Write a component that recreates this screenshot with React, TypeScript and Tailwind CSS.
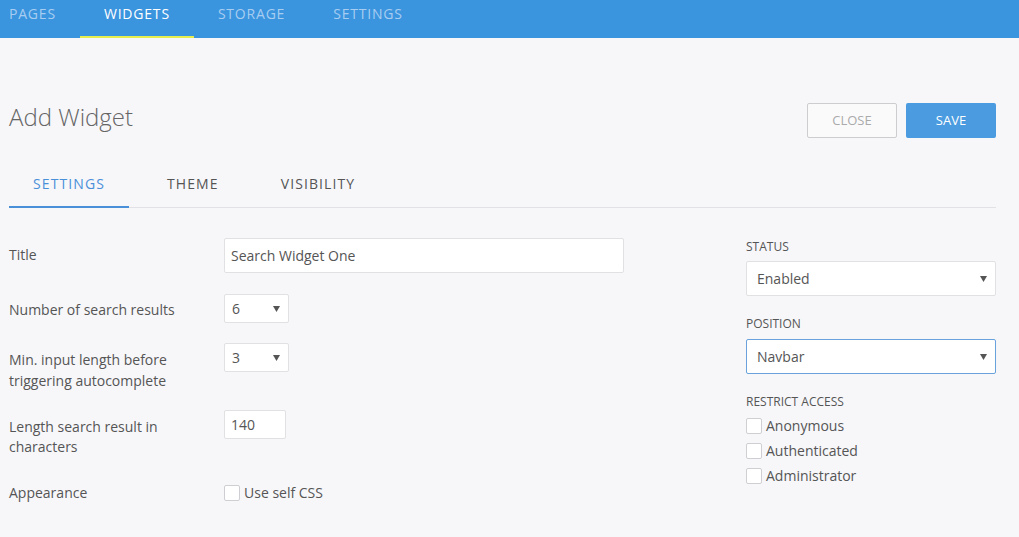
import { useState } from "react";

const NAV = ["Pages", "Widgets", "Storage", "Settings"];
const TABS = ["Settings", "Theme", "Visibility"];
const ROLES = ["Anonymous", "Authenticated", "Administrator"];

function Caret() {
  return (
    <svg width="7" height="6" viewBox="0 0 7 6" className="pointer-events-none absolute right-[8px] top-1/2 -translate-y-1/2">
      <path d="M0 0h7L3.5 6z" fill="#555" />
    </svg>
  );
}

function Select({ value, className, focused }: { value: string; className: string; focused?: boolean }) {
  return (
    <div
      className={`relative flex items-center rounded-[2px] border bg-white text-[14px] text-[#555] ${
        focused ? "border-[#6aa3dc]" : "border-[#e1e1e4]"
      } ${className}`}
    >
      {value}
      <Caret />
    </div>
  );
}

function Checkbox({ label }: { label: string }) {
  return (
    <label className="flex items-center gap-[4px] text-[14px] text-[#555]">
      <span className="h-[16px] w-[16px] rounded-[2px] border border-[#cfcfd3] bg-white" />
      {label}
    </label>
  );
}

export default function App() {
  const [tab] = useState("Settings");

  return (
    <div className="min-h-screen bg-[#f7f7fa] font-['Open_Sans',sans-serif] text-[#555]">
      {/* top bar */}
      <nav className="flex h-[38px] bg-[#3b94de]">
        <ul className="-ml-[15px] flex">
          {NAV.map((n) => (
            <li
              key={n}
              className={`h-[38px] border-b-2 px-6 pt-[5px] text-[14px] leading-[18px] uppercase tracking-[0.8px] ${
                n === "Widgets" ? "border-[#e6ef4e] text-white" : "border-transparent text-[#a7cdf1]"
              }`}
            >
              {n}
            </li>
          ))}
        </ul>
      </nav>

      <main className="pl-[9px] pr-[23px]">
        <div className="mt-[65px] flex items-start justify-between">
          <h1 className="-mt-[4px] text-[24px] font-light leading-9 text-[#666]">Add Widget</h1>
          <div className="flex gap-[9px]">
            <button className="h-[35px] w-[90px] rounded-[2px] border border-[#cdcdcf] bg-[#fafafb] text-[13px] text-[#aaa]">
              CLOSE
            </button>
            <button className="h-[35px] w-[90px] rounded-[2px] bg-[#4a9be0] text-[13px] text-white">SAVE</button>
          </div>
        </div>

        <div className="mt-[35px] flex border-b border-[#e2e2e6]">
          {TABS.map((t) => (
            <div
              key={t}
              className={`-mb-[1px] border-b-2 px-6 pb-[12px] text-[14px] uppercase tracking-[1.1px] ${
                t === tab ? "border-[#4a90d9] text-[#4a90d9]" : "border-transparent text-[#555]"
              } ${t === "Theme" ? "px-[38px]" : ""}`}
            >
              {t}
            </div>
          ))}
        </div>

        <div className="mt-[30px] flex justify-between">
          <div className="flex flex-col">
            <div className="mb-[21px] flex items-start">
              <span className="w-[215px] pt-[7px] text-[14px] leading-5">Title</span>
              <div className="flex h-[35px] w-[400px] items-center rounded-[2px] border border-[#e1e1e4] bg-white px-[6px] text-[14px]">
                Search Widget One
              </div>
            </div>
            <div className="mb-[20px] flex items-start">
              <span className="w-[215px] pt-[6px] text-[14px] leading-5">Number of search results</span>
              <Select value="6" className="h-[29px] w-[65px] px-[7px]" />
            </div>
            <div className="mb-[19px] flex items-start">
              <span className="w-[215px] pt-[6px] text-[14px] leading-[21px]">
                Min. input length before
                <br />
                triggering autocomplete
              </span>
              <Select value="3" className="h-[29px] w-[65px] px-[7px]" />
            </div>
            <div className="mb-[25px] flex items-start">
              <span className="w-[215px] pt-[7px] text-[14px] leading-5">
                Length search result in
                <br />
                characters
              </span>
              <div className="flex h-[29px] w-[62px] items-center rounded-[2px] border border-[#e1e1e4] bg-white px-[6px] text-[14px]">
                140
              </div>
            </div>
            <div className="flex items-center">
              <span className="w-[215px] text-[14px] leading-5">Appearance</span>
              <Checkbox label="Use self CSS" />
            </div>
          </div>

          <div className="flex w-[250px] flex-col">
            <span className="mb-[6px] pt-[1px] text-[12px] leading-4">STATUS</span>
            <Select value="Enabled" className="h-[35px] w-full px-[10px]" />
            <span className="mb-[7px] mt-[20px] text-[12px] leading-4">POSITION</span>
            <Select value="Navbar" focused className="h-[35px] w-full px-[10px]" />
            <span className="mb-[5px] mt-[20px] text-[12px] leading-4">RESTRICT ACCESS</span>
            <div className="flex flex-col gap-[4px]">
              {ROLES.map((r) => (
                <Checkbox key={r} label={r} />
              ))}
            </div>
          </div>
        </div>
      </main>
    </div>
  );
}
